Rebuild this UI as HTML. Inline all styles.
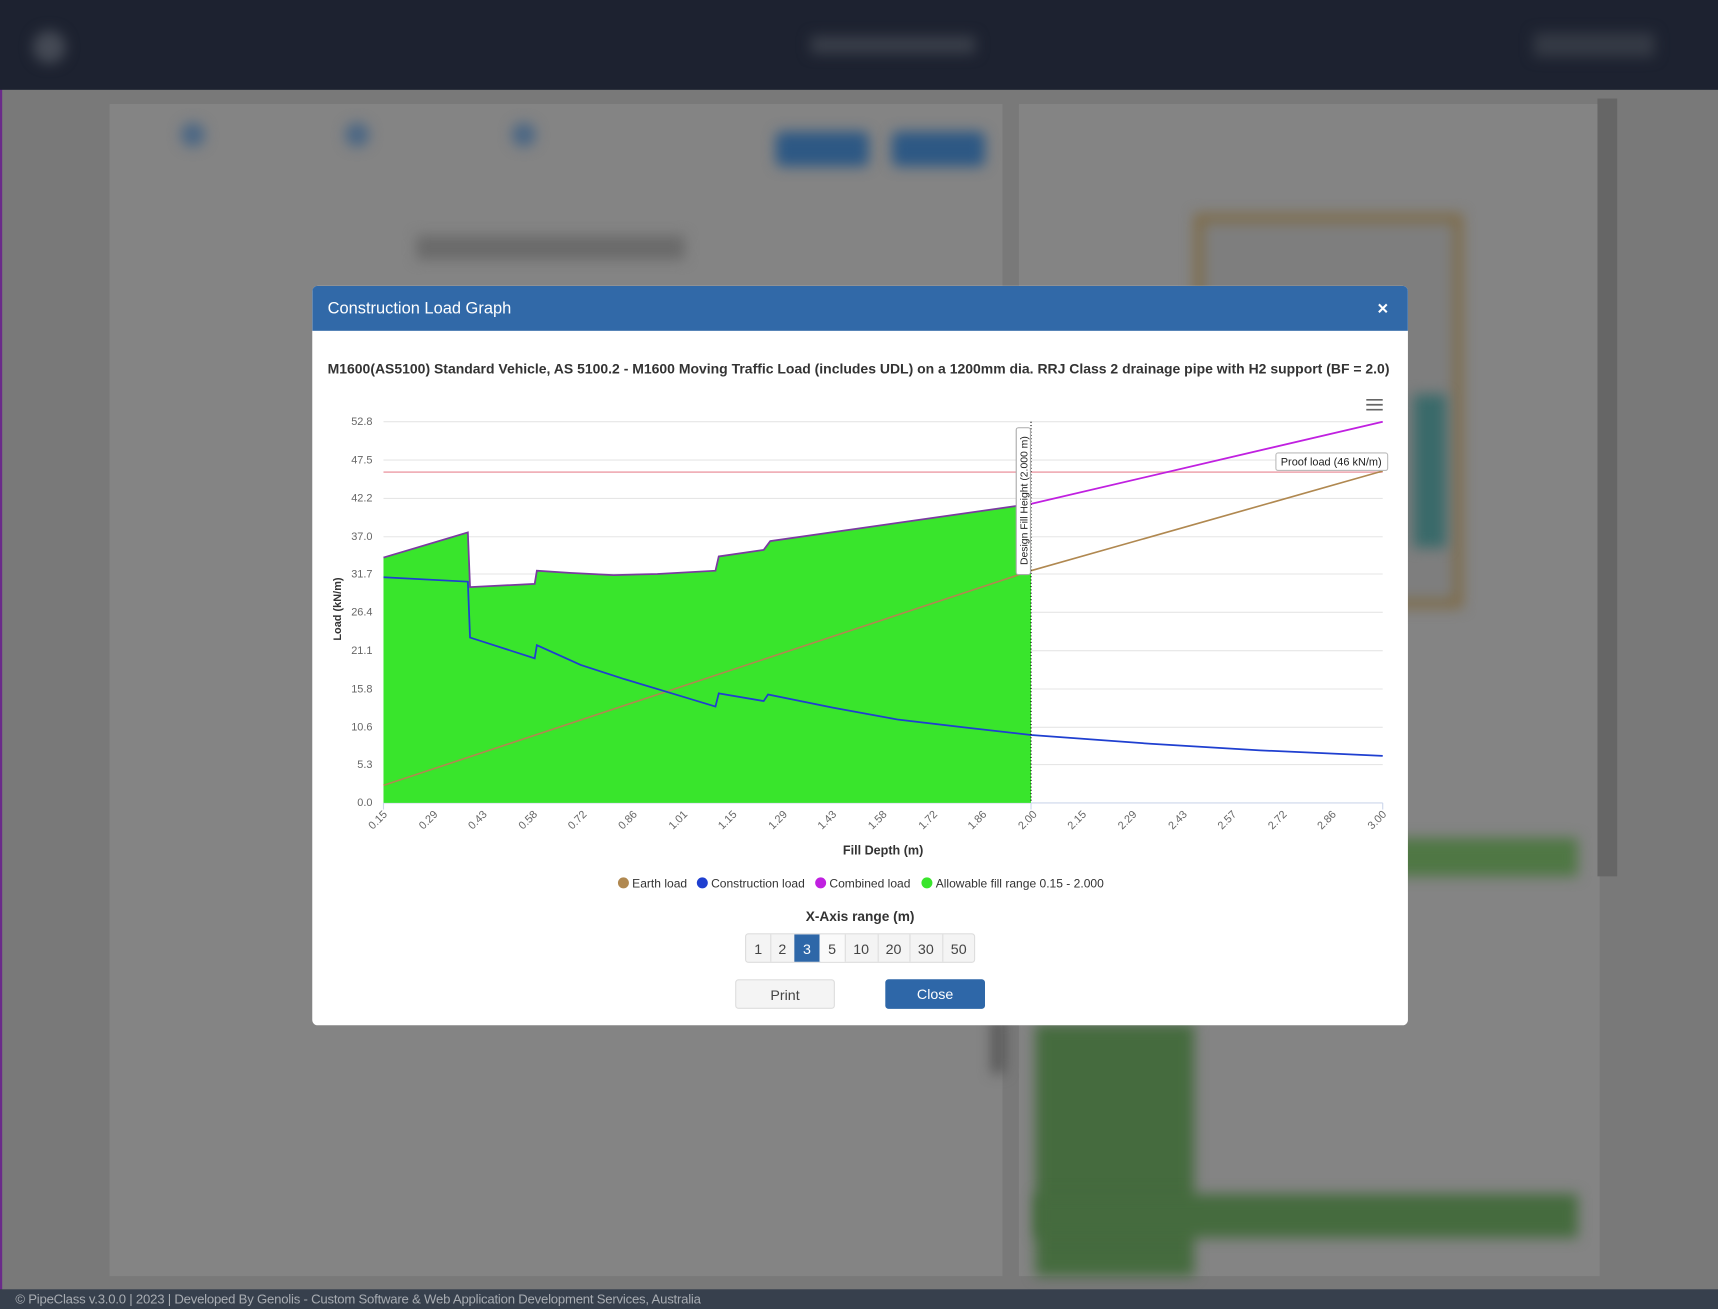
<!DOCTYPE html>
<html><head><meta charset="utf-8"><style>
html,body{margin:0;padding:0;width:1718px;height:1309px;overflow:hidden;background:#777;font-family:"Liberation Sans",Arial,sans-serif}
#w{position:absolute;left:0;top:0;width:1568px;height:1195px;transform:scale(1.09566,1.0954);transform-origin:0 0}
.a{position:absolute}
.blur{filter:blur(6px)}
.btn{position:absolute;top:0;height:27px;line-height:27px;text-align:center;font-size:13px;color:#444;border-right:1px solid #ddd}
</style></head><body><div id="w">
<div class="a" style="left:0;top:0;width:1568px;height:1195px;background:#797979"></div>
<div class="a" style="left:0;top:0;width:2px;height:1195px;background:#6a2a8a"></div>
<div class="a" style="left:100px;top:95px;width:815px;height:1070px;background:#848484"></div>
<div class="a" style="left:930px;top:95px;width:530px;height:1070px;background:#848484"></div>
<div class="a" style="left:1458px;top:90px;width:18px;height:710px;background:#666"></div>
<div class="a blur" style="left:1090px;top:195px;width:245px;height:360px;border:8px solid #7e6a44;box-sizing:border-box;background:#7e7e7e"></div>
<div class="a blur" style="left:1290px;top:360px;width:30px;height:140px;background:#3a6a6a"></div>
<div class="a blur" style="left:940px;top:765px;width:500px;height:35px;background:#4f7744"></div>
<div class="a blur" style="left:945px;top:935px;width:145px;height:230px;background:#456b3e"></div>
<div class="a blur" style="left:945px;top:1090px;width:495px;height:40px;background:#456b3e"></div>
<div class="a blur" style="left:708px;top:120px;width:85px;height:32px;background:#2d5884;border-radius:6px"></div>
<div class="a blur" style="left:814px;top:120px;width:85px;height:32px;background:#2d5884;border-radius:6px"></div>
<div class="a blur" style="left:165px;top:112px;width:22px;height:22px;background:#4a6684;border-radius:50%"></div>
<div class="a blur" style="left:315px;top:112px;width:22px;height:22px;background:#4a6684;border-radius:50%"></div>
<div class="a blur" style="left:467px;top:112px;width:22px;height:22px;background:#4a6684;border-radius:50%"></div>
<div class="a blur" style="left:380px;top:215px;width:245px;height:22px;background:#6a6a6a"></div>
<div class="a blur" style="left:905px;top:930px;width:12px;height:50px;background:#555"></div>
<div class="a" style="left:0;top:0;width:1568px;height:82px;background:#1d2230"></div>
<div class="a blur" style="left:30px;top:28px;width:30px;height:30px;background:#454a55;border-radius:50%"></div>
<div class="a blur" style="left:740px;top:33px;width:150px;height:16px;background:#3a3f4a"></div>
<div class="a blur" style="left:1400px;top:30px;width:110px;height:22px;background:#353a45"></div>
<div class="a" style="left:0;top:1177px;width:1568px;height:18px;background:#37404d"></div>
<div class="a" style="left:14px;top:1179px;font-size:12px;color:#a8acb2;white-space:nowrap;letter-spacing:-0.2px">© PipeClass v.3.0.0 | 2023 | Developed By Genolis - Custom Software &amp; Web Application Development Services, Australia</div>

<div class="a" style="left:285px;top:261px;width:1000px;height:675px;background:#fff;border-radius:5px;overflow:hidden">
 <div style="height:41px;background:#3169a8;color:#fff;font-size:15px;line-height:41px;padding-left:14px">Construction Load Graph<span style="position:absolute;right:18px;top:0;font-size:17px;font-weight:bold">×</span></div>
</div>
<div class="a" style="left:299px;top:329px;font-size:12.75px;font-weight:bold;color:#333;white-space:nowrap">M1600(AS5100) Standard Vehicle, AS 5100.2 - M1600 Moving Traffic Load (includes UDL) on a 1200mm dia. RRJ Class 2 drainage pipe with H2 support (BF = 2.0)</div>

<svg class="a" style="left:0;top:0" width="1568" height="1195" font-family="Liberation Sans,Arial,sans-serif">
<g stroke="#e6e6e6" stroke-width="1">
<line x1="350" x2="1262" y1="385" y2="385"/><line x1="350" x2="1262" y1="420" y2="420"/><line x1="350" x2="1262" y1="455" y2="455"/><line x1="350" x2="1262" y1="490" y2="490"/><line x1="350" x2="1262" y1="524" y2="524"/><line x1="350" x2="1262" y1="559" y2="559"/><line x1="350" x2="1262" y1="594" y2="594"/><line x1="350" x2="1262" y1="629" y2="629"/><line x1="350" x2="1262" y1="664" y2="664"/><line x1="350" x2="1262" y1="698" y2="698"/>
</g>
<line x1="350" x2="1262" y1="733" y2="733" stroke="#ccd6eb"/>
<g font-size="10" fill="#666" text-anchor="end">
<text x="340" y="388">52.8</text><text x="340" y="423">47.5</text><text x="340" y="458">42.2</text><text x="340" y="493">37.0</text><text x="340" y="527">31.7</text><text x="340" y="562">26.4</text><text x="340" y="597">21.1</text><text x="340" y="632">15.8</text><text x="340" y="667">10.6</text><text x="340" y="701">5.3</text><text x="340" y="736">0.0</text>
</g>
<text transform="translate(311,556) rotate(-90)" font-size="10" font-weight="bold" fill="#333" text-anchor="middle">Load (kN/m)</text>
<polygon fill="#39e52c" points="350,509 427,486 429,536 488,533 490,521 520,523 560,525 600,524 653,521 656,508 697,502 703,494 941,460 941,733 350,733"/>
<line x1="350" x2="1262" y1="431" y2="431" stroke="#f0b0b8" stroke-width="1.5"/>
<polyline fill="none" stroke="#b08850" stroke-width="1.5" points="350,717 941,521 1262,430"/>
<polyline fill="none" stroke="#1f3fd0" stroke-width="1.6" points="350,527 427,531 429,582 488,601 490,589 530,607 570,620 610,632 653,645 656,633 697,640 701,634 760,646 820,657 880,664 941,671 1050,679 1150,685 1262,690"/>
<polyline fill="none" stroke="#7a3aa0" stroke-width="1.6" points="350,509 427,486 429,536 488,533 490,521 520,523 560,525 600,524 653,521 656,508 697,502 703,494 941,460"/>
<polyline fill="none" stroke="#c020e0" stroke-width="1.6" points="941,460 1262,385"/>
<line x1="941" x2="941" y1="385" y2="733" stroke="#000" stroke-dasharray="1,2"/>
<rect x="927.5" y="390.5" width="13" height="134" fill="#fff" stroke="#aaa" rx="2"/>
<text transform="translate(938,457) rotate(-90)" font-size="9.5" fill="#222" text-anchor="middle">Design Fill Height (2.000 m)</text>
<rect x="1164.5" y="413.5" width="102" height="16" fill="#fff" stroke="#bbb" rx="2"/>
<text x="1215" y="425" font-size="10" fill="#222" text-anchor="middle">Proof load (46 kN/m)</text>
<g stroke="#666" stroke-width="1.5"><line x1="1247" x2="1262" y1="365" y2="365"/><line x1="1247" x2="1262" y1="369.5" y2="369.5"/><line x1="1247" x2="1262" y1="374" y2="374"/></g>
<g stroke="#ccd6eb"><line x1="350" x2="350" y1="733" y2="739"/><line x1="941" x2="941" y1="733" y2="739"/><line x1="1262" x2="1262" y1="733" y2="739"/></g>
<g font-size="10" fill="#666" text-anchor="end">
<text transform="translate(354,744) rotate(-45)">0.15</text><text transform="translate(400,744) rotate(-45)">0.29</text><text transform="translate(445,744) rotate(-45)">0.43</text><text transform="translate(491,744) rotate(-45)">0.58</text><text transform="translate(536,744) rotate(-45)">0.72</text><text transform="translate(582,744) rotate(-45)">0.86</text><text transform="translate(628,744) rotate(-45)">1.01</text><text transform="translate(673,744) rotate(-45)">1.15</text><text transform="translate(719,744) rotate(-45)">1.29</text><text transform="translate(764,744) rotate(-45)">1.43</text><text transform="translate(810,744) rotate(-45)">1.58</text><text transform="translate(856,744) rotate(-45)">1.72</text><text transform="translate(901,744) rotate(-45)">1.86</text><text transform="translate(947,744) rotate(-45)">2.00</text><text transform="translate(992,744) rotate(-45)">2.15</text><text transform="translate(1038,744) rotate(-45)">2.29</text><text transform="translate(1084,744) rotate(-45)">2.43</text><text transform="translate(1129,744) rotate(-45)">2.57</text><text transform="translate(1175,744) rotate(-45)">2.72</text><text transform="translate(1220,744) rotate(-45)">2.86</text><text transform="translate(1266,744) rotate(-45)">3.00</text>
</g>
<text x="806" y="780" font-size="11.5" font-weight="bold" fill="#333" text-anchor="middle">Fill Depth (m)</text>
<g font-size="11" fill="#333">
<circle cx="569" cy="806" r="5" fill="#b08850"/><text x="577" y="810">Earth load</text>
<circle cx="641" cy="806" r="5" fill="#1f3fd0"/><text x="649" y="810">Construction load</text>
<circle cx="749" cy="806" r="5" fill="#c020e0"/><text x="757" y="810">Combined load</text>
<circle cx="846" cy="806" r="5" fill="#39e52c"/><text x="854" y="810">Allowable fill range 0.15 - 2.000</text>
</g>
<text x="785" y="841" font-size="12.5" font-weight="bold" fill="#333" text-anchor="middle">X-Axis range (m)</text>
</svg>

<div class="a" style="left:680px;top:852px;width:210px;height:27px;border:1px solid #ddd;box-sizing:border-box;border-radius:3px;background:#f4f4f4;overflow:hidden">
<div class="btn" style="left:0;width:22px">1</div><div class="btn" style="left:22px;width:22px">2</div><div class="btn" style="left:44px;width:23px;background:#2e67a8;color:#fff">3</div><div class="btn" style="left:67px;width:23px;background:#fafafa">5</div><div class="btn" style="left:90px;width:30px">10</div><div class="btn" style="left:120px;width:29px">20</div><div class="btn" style="left:149px;width:30px">30</div><div class="btn" style="left:179px;width:30px;border:0">50</div>
</div>
<div class="a" style="left:671px;top:894px;width:91px;height:27px;line-height:27px;text-align:center;font-size:13px;color:#444;background:#f4f4f4;border:1px solid #ddd;box-sizing:border-box;border-radius:3px">Print</div>
<div class="a" style="left:808px;top:894px;width:91px;height:27px;line-height:27px;text-align:center;font-size:13px;color:#fff;background:#2e67a8;border-radius:3px">Close</div>
</div></body></html>
